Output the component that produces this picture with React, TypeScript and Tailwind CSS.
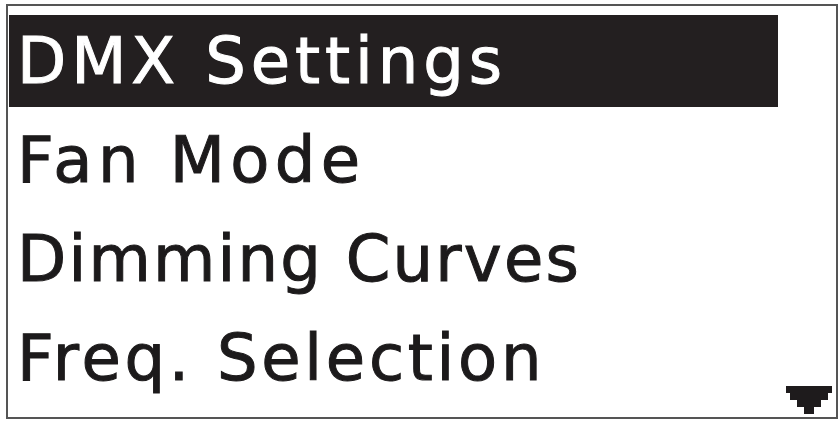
import React from "react";

const items = [
  { label: "DMX Settings", track: "tracking-[4.9px]" },
  { label: "Fan Mode", track: "tracking-[5.4px]" },
  { label: "Dimming Curves", track: "tracking-[2.2px]" },
  { label: "Freq. Selection", track: "tracking-[3.7px]" },
];

function ScrollArrow() {
  // stepped, pixel-style down arrow of the LCD menu
  return (
    <svg width="46" height="28" viewBox="0 0 46 28" className="absolute right-[4px] bottom-[3px]">
      <polygon
        fill="#1e1b1c"
        points="0,0 46,0 46,7 42,7 42,14 35,14 35,21 28,21 28,28 18,28 18,21 11,21 11,14 4,14 4,7 0,7"
      />
    </svg>
  );
}

export default function App() {
  return (
    <div className="w-[840px] h-[421px] bg-white overflow-hidden">
      <div className="relative ml-[6px] mt-[4px] w-[832px] h-[415px] border-2 border-[#555555] pt-[9px] pl-[1px]">
        {items.map((it, i) => (
          <div key={it.label} className="h-[99px]">
            <div
              className={
                "w-[769px] h-[92px] leading-[92px] pl-[8px] text-[64px] whitespace-nowrap [-webkit-text-stroke:1px_currentColor] " +
                it.track +
                " " +
                (i === 0 ? "bg-[#231f20] text-white" : "text-[#1c1a1b]")
              }
              style={{ fontFamily: '"DejaVu Sans", sans-serif' }}
            >
              {it.label}
            </div>
          </div>
        ))}
        <ScrollArrow />
      </div>
    </div>
  );
}
